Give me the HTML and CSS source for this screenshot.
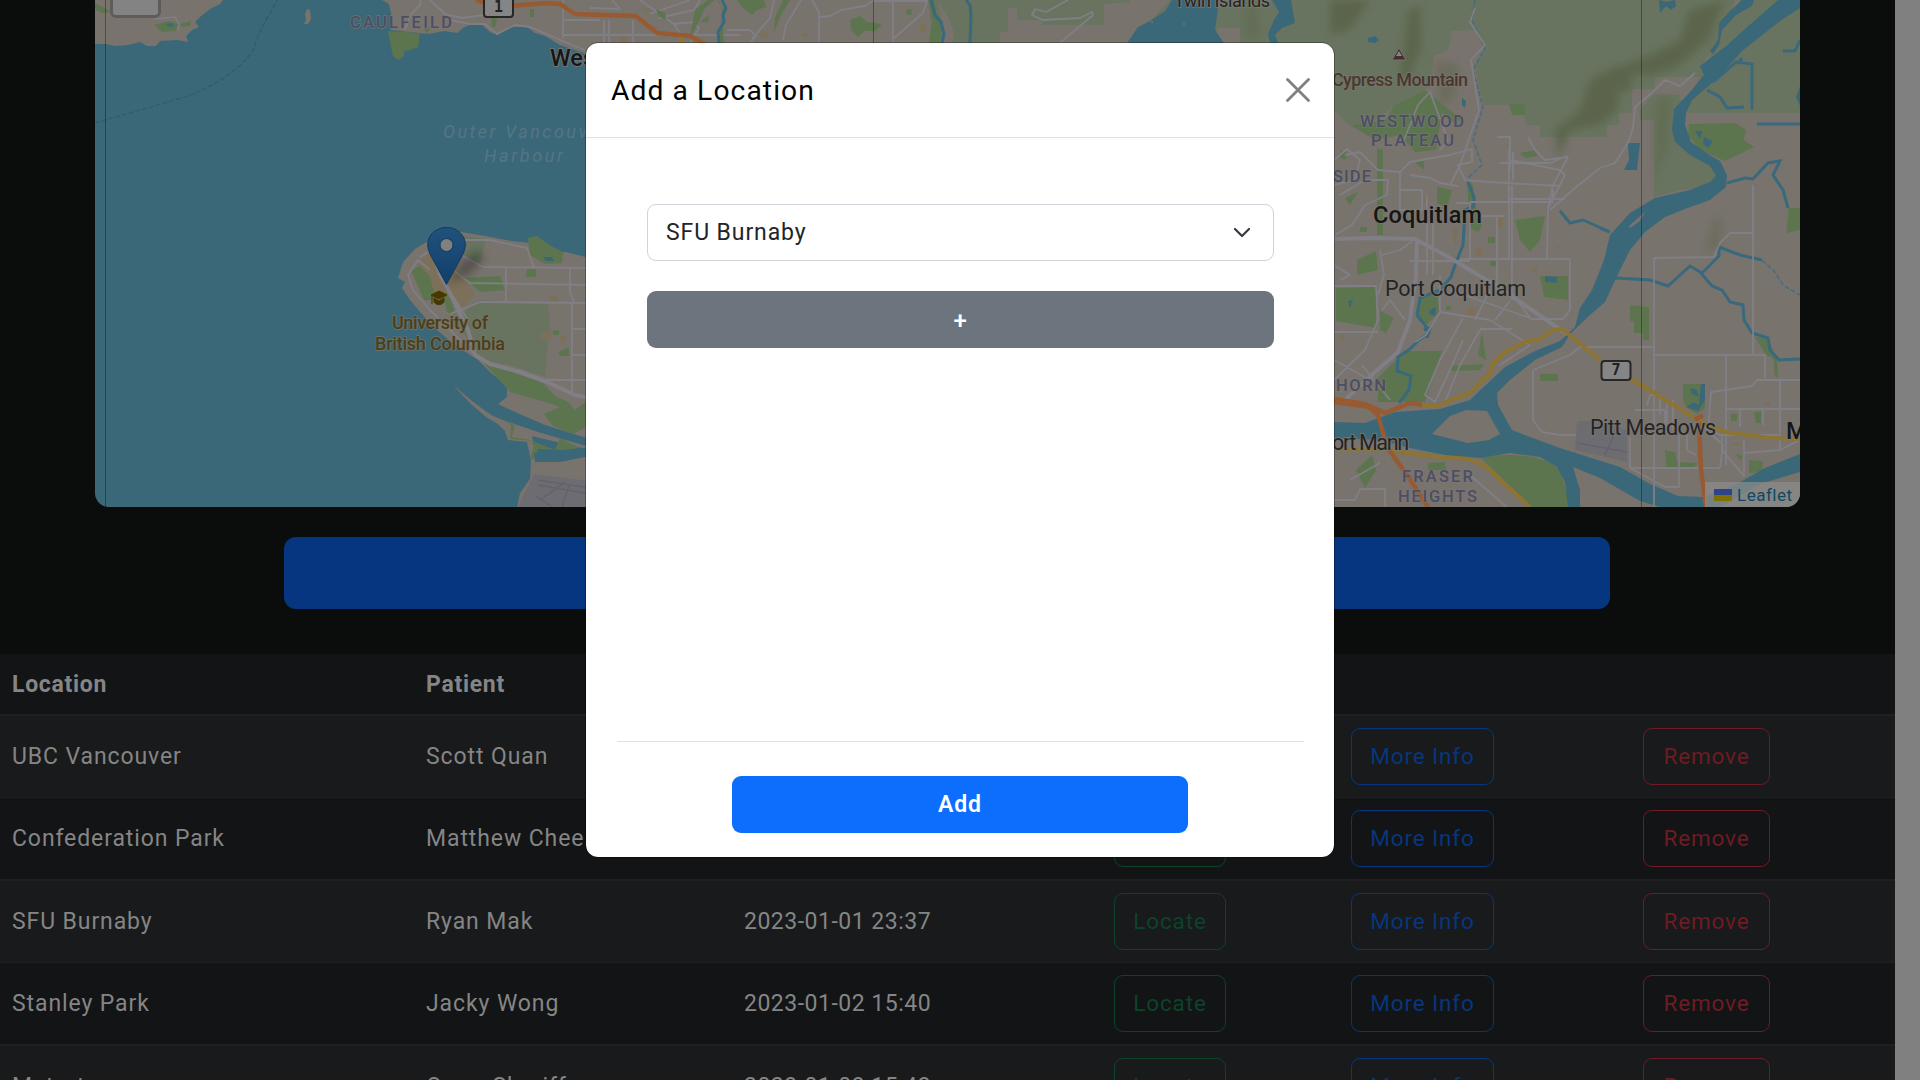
FILE: index.html
```html
<!DOCTYPE html>
<html lang="en">
<head>
<meta charset="utf-8">
<title>Locations</title>
<link rel="stylesheet" href="styles.css">
</head>
<body>
<div class="page">
<main class="content">
<section class="map">
<svg class="map-canvas" viewBox="95 0 1705 507" width="1705" height="507">
<defs>
<linearGradient id="pin" x1="0" y1="0" x2="0" y2="1"><stop offset="0" stop-color="#1f527c"/><stop offset="1" stop-color="#123f6b"/></linearGradient>
<filter id="soft" x="-30%" y="-30%" width="160%" height="160%"><feGaussianBlur stdDeviation="5"/></filter>
<filter id="relief" x="-10%" y="-10%" width="120%" height="120%"><feGaussianBlur stdDeviation="4"/></filter>
</defs>
<rect class="water" x="95" y="0" width="1705" height="507"/>
<!-- west islands and north shore -->
<path class="land" d="M95 0H223L220 4 210 9 200 17 195 22 199 27 192 30 186 36 188 42 178 40 160 41 156 46 147 46 140 42 128 45 115 46 106 44 95 44Z"/>
<path class="park" d="M95 3L112 12 102 13 95 9ZM154 25L170 21 178 24 176 31 162 32ZM180 24L191 21 190 26 182 27Z"/>
<path class="stream" d="M167 25H173"/>
<path class="road thin" d="M155 19L175 17 179 24 178 30"/>
<path class="land" d="M307 9L310 10 311 19 308 24 304 24 306 20 305 14Z"/>
<path class="land" d="M382 0L389 4 392 18 391 30 428 34 445 31 457 33 463 28 471 24 480 23 490 32 498 35 510 27 527 27 535 33 545 36 560 45 590 55H1340V0Z"/>
<path class="park" d="M388 31L420 33 418 47 410 50 404 51 404 56 398 60 393 56 391 47ZM424 29L430 28 427 35ZM491 18L497 18 495 27 492 27ZM530 9h4v8h-4Z"/>
<path class="road" d="M405 30L411 14 420 5 421 0M440 8L450 20 470 24 485 24 497 34 515 25 530 27 565 42 585 50M430 0L445 14 462 18 484 15M563 0V38M563 20H600M563 35H740M604 20V43M609 20V43M633 20V43M590 8L620 9 612 0M640 0L660 14 674 24 694 22 699 28 690 43M674 24L681 35 681 43M650 14L690 0M658 18L694 10 700 0M727 30H750L756 36 750 43M752 39L770 18 774 0M783 40L786 25 801 0M812 0L819 12V43M819 17L830 16 841 10 865 6 873 1H930M893 2V43M893 39L923 13 927 1"/>
<path class="park" d="M690 38L697 25 705 8 715 0H708L695 10ZM700 22L709 15 708 22ZM737 0L743 8 752 15 757 10 766 7 764 0ZM774 32L781 15 790 0 783 0 775 17ZM850 20L860 16 867 22 877 23 882 25 875 31 864 31 858 37 851 30ZM906 10L912 9 911 15 906 14ZM717 0L722 8 721 28 718 43 724 43 722 20 725 12 718 0ZM656 9L665 13 666 20 658 16Z"/>
<path class="field" d="M760 33L768 32 766 37 760 37ZM802 33H808V37H802ZM920 24H926V32H920ZM641 9L650 8 646 14ZM620 37H627V43H620Z"/>
<path class="stream" d="M722 0L726 8 723 15 724 22 718 32 719 43"/>
<path class="forest" d="M932 0L930 18 940 30 937 43H1340V0Z"/>
<path class="park" d="M928 0H934L937 17 942 28 939 43H929L932 20Z"/>
<path class="land" d="M938 0L950 20 954 34 952 43H944ZM1000 43V32H1008V8H1017V20H1042V25H1104V4L1130 2V0H1170L1130 43ZM1217 43V28H1240V43Z"/>
<path class="stream" d="M931 0L935 15 941 22 944 34 942 43M966 0L970 5 971 15 970 43"/>
<path class="road" d="M1068 0L1046 12 1035 9 1032 15 1043 20 1080 18 1092 12 1093 15 1060 43"/>
<path class="water" d="M1127 43L1138 27 1150 21 1165 11 1172 0H1219L1215 30 1224 43ZM1272 0H1291L1295 23 1282 28 1275 35 1278 43H1270L1268 34 1274 20 1279 12Z"/>
<circle class="land" cx="1152" cy="22" r="1"/><circle class="land" cx="1184" cy="24" r="1"/>
<path class="coast" d="M95 123L140 110 185 97C215 87 250 63 255 45S270 15 277 0"/>
<path class="highway" d="M476 0L495 7 548 3 560 4 575 14 636 16 657 33 690 36 708 46"/>
<path class="arterial" d="M681 37V43"/>

<!-- Point Grey -->
<path class="land" d="M430 240L445 232 461 232 485 236 512 241 530 243 535 252 550 257 565 252 590 258V439L545 425 515 412 498 404 507 397V386L490 372 478 360 455 345 438 331 420 312 410 300 402 288 405 282 398 278 403 262 415 249Z"/>
<path class="forest" d="M461 236L486 239 480 263 460 255ZM455 319L480 300 548 304 550 320 545 377 510 365 480 360Z"/>
<path class="field" d="M428 252L445 247 475 295 460 310 430 290 418 265Z"/>
<path class="park" d="M528 238L537 236 551 246 563 252 562 263 545 264 530 255ZM464 278L500 276 505 290 480 292ZM483 362L500 368 543 383 555 396 568 402 575 410 590 399V425L573 434 553 426 544 414 560 407 545 402 510 392ZM411 270L420 266 430 277 436 300 424 300ZM442 290L452 300 455 315 447 312ZM527 269H536V277H526ZM558 352L569 347V356H560ZM552 331L559 330V335H554Z"/>
<path class="field" d="M560 336H566V343H560ZM538 335L552 330 551 340 542 339ZM550 296H558V301H550Z"/>
<path class="water" d="M543 257L552 257 554 261 546 261Z"/>
<path class="road wide" d="M434 255L440 275 447 287 468 330 475 355 490 364 520 372 547 382 575 395 590 398"/>
<path class="road" d="M430 270L418 260 408 275 413 290 430 310 455 335 475 355M420 257L450 240 490 240 527 248 534 268M460 254L483 267 590 268M440 260L470 283 590 285M450 314L480 302 590 303M506 267V302M570 268V292L574 303M572 304V395M572 329H590M572 355H590M545 380H590M448 288L468 320"/>
<path class="land" d="M453 385L472 401 491 415 503 420 541 433 590 447V450L532 436 535 452 550 460 590 450V507H517L520 493 530 479 531 460 527 442 508 440 505 431 498 424 486 417 470 403Z"/>
<path class="park" d="M503 420L511 425 510 439 535 441 530 460 534 459 538 449 585 451 560 438 555 450 530 440 512 437 515 425Z"/>
<path class="water" d="M534 453L590 447V456L560 462 535 462Z"/>
<path class="airport" d="M534 474L590 481V507H518Z"/>
<path class="runway" d="M538 480L590 488M538 485L590 494M540 500L565 482M536 496L552 507M562 507L569 486"/>

<!-- eastern municipalities -->
<path class="land" d="M1330 0H1800V507H1330Z"/>
<path class="forest" d="M1330 0V105L1348 125 1375 120 1402 101 1430 87 1434 55 1448 50 1452 31 1475 30 1485 50 1475 65 1478 85 1484 105H1525V125H1540V137H1607V125H1619V113H1607V113H1632V89H1655V77H1700L1705 60 1725 35 1735 0Z"/>
<path class="forest" d="M1800 0H1740L1705 65 1685 113H1800ZM1654 94L1680 95 1690 150 1725 170 1710 186 1680 190 1654 197V120H1640V110Z"/>
<g filter="url(#relief)" class="relief">
<path d="M1408 10L1420 5 1422 45 1410 75 1400 80 1405 40ZM1690 10L1725 0 1708 40 1680 65 1655 75 1632 75 1632 89 1600 100 1600 75 1650 55 1680 40ZM1590 80L1618 65 1618 110 1600 125 1570 130 1558 160 1555 130 1580 110ZM1330 0L1370 0 1350 30 1330 35Z"/>
<path d="M1655 100L1672 95 1668 150 1655 180ZM1715 215L1722 220 1720 245 1704 255ZM1435 60L1460 65 1455 95 1440 110ZM1245 0H1255L1260 35 1245 40Z" opacity=".5"/>
</g>
<path class="park" d="M1395 105L1425 90 1462 120 1450 122 1442 112 1436 150 1415 152 1400 135 1375 140 1350 125 1385 120ZM1509 104H1525V115H1512ZM1377 148L1383 150V235H1377ZM1437 187L1452 190 1447 208 1437 203ZM1520 153L1534 150 1538 156 1525 158ZM1357 260L1376 251 1378 270 1357 275ZM1336 288L1376 287V328L1336 321ZM1380 311L1394 318 1386 333 1380 330ZM1419 298L1437 294 1439 312 1426 325 1418 320ZM1405 351L1442 351 1425 402 1378 402V378ZM1540 276L1568 276V300L1544 297ZM1540 374H1558V381H1540ZM1515 220L1545 216 1540 240 1530 252 1520 240ZM1450 366L1484 364 1480 370 1452 371ZM1482 332L1486 360 1478 355ZM1356 470L1372 455 1376 470 1365 488ZM1428 463L1445 462 1446 470 1428 470ZM1480 457C1520 451 1555 458 1562 475L1570 507H1532ZM1689 124L1735 123 1746 130 1744 140 1754 147 1725 161 1700 150 1688 135ZM1789 208H1800V230L1786 233ZM1630 305L1649 307V340H1643V333H1634V321H1630ZM1683 384H1705V408L1697 414 1687 408 1683 400ZM1665 450L1675 452 1677 462 1698 463 1694 467 1666 467ZM1749 460L1763 461 1762 472 1749 473ZM1731 414H1737V421H1731ZM1754 412H1761V423H1756ZM1736 454L1743 456 1740 461ZM1755 337L1768 338 1777 360 1778 377 1775 377 1773 358 1766 355ZM1467 180L1473 185 1475 205 1482 225 1478 232 1470 228ZM1341 150L1347 153 1346 160 1340 158ZM1358 192L1350 205 1345 198ZM1415 162L1424 161V170ZM1360 227H1367V232H1360ZM1488 237H1495V243H1488ZM1490 261H1496V266H1490ZM1446 306H1451V310H1446Z"/>
<path class="field" d="M1476 248H1482V256H1476ZM1497 216H1503V227H1497ZM1466 309L1475 308V315H1466ZM1452 230L1459 228 1455 245ZM1530 268L1538 267 1536 273ZM1560 245L1563 250 1556 248ZM1430 195L1425 203 1421 200ZM1340 335L1344 334V340H1340ZM1765 403L1770 402V406H1765ZM1732 443H1740V445H1732Z"/>
<g class="river">
<path d="M1778 0L1800 0V8L1780 21 1742 51 1718 78 1692 100 1686 113 1685 125 1691 142 1708 154 1720 161 1727 175 1726 187 1710 200 1685 209 1665 217 1645 232 1630 250 1619 272 1605 302 1590 315 1571 333 1562 347 1535 360 1510 380 1497 393 1498 405 1512 430 1530 437 1560 448 1585 456 1620 467 1650 484 1678 496 1705 497 1735 485 1765 468 1800 454V472L1760 484 1720 507H1660L1640 501 1600 478 1573 467 1580 490 1580 507H1568L1565 482 1557 467 1540 457 1510 453 1480 458 1450 456 1410 448 1380 440 1334 438V422L1365 423 1395 412 1440 409 1470 400 1488 383 1505 367 1535 351 1560 341 1575 327 1580 308 1592 290 1604 260 1610 235 1630 213 1655 198 1690 190 1710 182 1716 176 1710 166 1690 155 1675 142 1672 130 1674 109 1690 92 1704 75 1700 66 1725 47 1745 29Z"/>
<path d="M1742 0L1754 0 1752 6 1736 15 1722 30 1719 45 1713 54 1710 51 1718 40 1719 23 1728 13ZM1659 0L1667 2 1675 0 1676 6 1671 10 1666 6 1660 13ZM1628 143H1640L1637 170 1624 170 1629 160ZM1368 38L1375 36 1379 40 1375 43 1368 42ZM1462 98L1466 101 1465 108 1462 105ZM1545 276L1557 277V283L1545 282ZM1430 310L1436 307 1435 316 1429 314ZM1348 301L1353 300 1350 308ZM1800 86L1796 97 1800 106ZM1690 388L1697 390 1699 397 1692 394ZM1701 384H1705V400L1698 411 1686 407 1694 402 1699 405ZM1704 137L1713 141 1708 148 1703 144ZM1695 131L1702 131 1700 139ZM1707 130L1715 134Z"/>
</g>
<path class="land" d="M1432 434L1450 416 1466 410 1487 411 1500 434 1489 440 1468 443ZM1629 226L1645 212 1640 221 1630 228Z"/>
<path class="stream" d="M1468 182L1474 197 1474 206 1465 210 1463 245 1455 265 1451 277 1440 290 1420 298 1417 315 1425 325 1429 333 1419 340 1410 349 1398 357 1397 371 1411 376 1409 390 1399 403M1424 330L1430 328 1427 338M1560 211L1570 223 1583 220 1608 231M1615 278L1650 280 1668 286 1690 266 1700 272 1712 286 1722 290 1730 302 1743 305 1744 320 1752 333 1768 338 1770 350 1779 360 1800 359M1702 273L1719 256V247L1740 255 1762 260M1600 228L1610 232M1727 183L1745 178 1753 179 1768 163 1780 161 1773 175 1783 190 1788 208M1713 82L1736 62 1752 64V110M1738 64L1742 58M1707 90L1720 97 1727 108 1744 107M1757 124H1800M1783 51L1795 51 1800 40"/>
<path class="creek" d="M1475 0L1472 20 1485 48 1473 70 1483 107 1473 140 1482 165 1468 178M1762 260L1775 272 1783 285 1800 295"/>
<path class="road wide" d="M1334 239L1375 238 1415 239 1445 255 1500 288 1555 326 1567 334M1417 240L1416 275 1410 320 1398 352 1375 372 1345 400"/>
<path class="road" d="M1475 8L1470 22 1485 45 1471 60 1479 110 1460 165 1450 185M1402 145L1418 105 1430 92 1448 140 1440 150M1334 160L1347 149 1360 160 1355 180 1334 185M1345 155L1360 152 1378 170 1400 172 1410 162 1450 155 1472 149 1472 162 1458 165 1465 180 1490 182 1560 186M1400 172V210H1422V190H1400M1340 195L1365 180 1388 180 1387 195 1365 205 1352 225 1335 235M1410 175L1430 178 1440 183 1458 186M1427 196V275M1433 205V275M1497 215V290M1509 150V258M1513 152V180M1470 202H1553M1482 216H1505M1553 190V200M1512 186V300M1510 199H1565M1500 163H1550L1567 156M1497 137H1510V170M1528 137L1535 150 1545 160 1568 157 1553 185 1548 208M1510 160L1560 170 1565 175 1548 208M1550 210L1575 188 1600 168 1615 163 1628 143 1633 128 1635 107 1655 90 1665 80 1680 86 1695 73M1548 208L1547 258M1460 259H1570V310L1563 319H1530M1456 203H1470V258M1410 261H1470M1334 286H1376L1378 320 1365 350 1334 380M1380 250L1384 275 1378 295M1334 332H1378M1382 255L1400 250 1415 239M1334 265L1350 275 1340 280M1440 275L1440 312 1426 335 1415 342M1440 312L1490 320 1530 345M1450 290L1530 318 1510 290M1495 320L1510 301M1463 318L1440 360 1425 395 1435 402 1450 370 1463 340M1480 330L1460 365 1445 402M1480 329H1512M1490 290L1475 320M1530 345L1500 365M1533 370V420L1542 432 1560 435H1580V422L1600 422M1533 370L1570 355 1580 347H1654M1654 510V258L1714 257 1720 243 1730 233H1753M1753 185V355M1655 355H1765V378M1726 355V395L1726 465M1708 435L1711 392 1752 386 1757 380H1800M1780 380V450M1726 409H1800M1740 409V427M1763 409V425M1635 410H1665V425M1647 405L1650 395H1660V415M1630 437V468H1720M1630 468L1665 487 1679 487V435M1700 425L1720 435 1780 435M1722 436V450L1744 476 1744 440M1720 468L1723 445 1707 430M1744 453L1780 450 1800 440M1330 500H1355L1360 489 1385 489V507M1350 480L1380 463M1470 475L1510 510M1405 320L1390 300 1382 310M1370 380L1334 360M1362 365L1390 400M1667 400V430M1687 430V450L1696 455M1673 400V430"/>
<path class="arterial" d="M1422 406H1438L1455 398 1468 394 1490 374 1492 365 1505 352 1525 342 1540 339 1552 330 1562 329 1600 360M1631 379L1700 421 1725 432 1770 438 1800 439M1340 449L1385 449 1405 453 1430 456 1470 459 1485 466 1530 507"/>
<path class="highway" d="M1334 399L1365 404 1385 413 1410 403 1422 405M1365 404L1378 415 1387 447 1407 475 1428 507M1334 402L1370 407M1699 422L1701 470 1706 507"/>
<path class="highway" d="M1695 420L1703 415"/>
<path class="airport" d="M1577 421H1600L1627 430V462L1575 450Z"/>
<path class="runway" d="M1577 443L1627 452M1605 455L1615 432"/>
<path class="tile" d="M105.500 0V507M873.500 0V507M1641.500 0V507"/>

<!-- labels -->
<g class="lbl area">
<text x="350" y="28" textLength="102">CAULFEILD</text>
<text x="1360" y="127" textLength="104">WESTWOOD</text>
<text x="1371" y="146" textLength="83">PLATEAU</text>
<text x="1333" y="182" textLength="38">SIDE</text>
<text x="1336" y="391" textLength="50">HORN</text>
<text x="1402" y="482" textLength="71">FRASER</text>
<text x="1398" y="502" textLength="79">HEIGHTS</text>
</g>
<g class="lbl sea">
<text x="443" y="138" textLength="164">Outer Vancouver</text>
<text x="484" y="162" textLength="79">Harbour</text>
</g>
<g class="lbl campus">
<text x="392" y="329" textLength="96">University of</text>
<text x="375" y="350" textLength="130">British Columbia</text>
</g>
<text class="lbl peak" x="1332" y="86" textLength="136">Cypress Mountain</text>
<g class="lbl town">
<text x="1385" y="296" textLength="141">Port Coquitlam</text>
<text x="1320" y="450" textLength="89">Port Mann</text>
<text x="1590" y="435" textLength="126">Pitt Meadows</text>
<text class="small" x="1174" y="7" textLength="96">Twin Islands</text>
</g>
<g class="lbl city">
<text x="550" y="66">West</text>
<text x="1373" y="223" textLength="109">Coquitlam</text>
<text x="1786" y="439">M</text>
</g>
<path class="peak-icon" d="M1392 60L1399 48 1406 60Z"/><path class="peak-cap" d="M1396 56L1399 51 1402 56Z"/>
<path class="cap-icon" d="M431 295L439 291 447 295 439 299ZM434 298L439 301 444 298V302C441 306 436 305 434 302ZM432 296V304"/>
<g class="shield">
<rect x="484" y="-8" width="29" height="25" rx="3"/><text x="498.500" y="12">1</text>
<rect x="1601.500" y="361" width="29" height="19" rx="3"/><text x="1616" y="375">7</text>
</g>
<path d="M447 284L462 262 478 250 484 258 470 274Z" filter="url(#soft)" opacity=".3"/>
<path d="M446.500 284.500L431 256C422 240 433 227.500 446.500 227.500S471 240 462 256Z" fill="url(#pin)" stroke="#133a5c"/>
<circle cx="446.500" cy="245" r="6.500" fill="#808080" stroke="#133a5c"/>
</svg>
<div class="zoom-control"></div>
<div class="attribution"><span class="flag"></span>Leaflet</div>
</section>
<div class="add-bar"></div>
<div class="table">
<div class="row head"><b>Location</b><b>Patient</b></div>
<div class="row"><span>UBC Vancouver</span><span>Scott Quan</span><span></span><a class="btn green">Locate</a><a class="btn blue">More Info</a><a class="btn red">Remove</a></div>
<div class="row"><span>Confederation Park</span><span>Matthew Chee</span><span></span><a class="btn green"></a><a class="btn blue">More Info</a><a class="btn red">Remove</a></div>
<div class="row"><span>SFU Burnaby</span><span>Ryan Mak</span><span class="date">2023-01-01 23:37</span><a class="btn green">Locate</a><a class="btn blue">More Info</a><a class="btn red">Remove</a></div>
<div class="row"><span>Stanley Park</span><span>Jacky Wong</span><span class="date">2023-01-02 15:40</span><a class="btn green">Locate</a><a class="btn blue">More Info</a><a class="btn red">Remove</a></div>
<div class="row"><span>Metrotown</span><span>Omar Sheriff</span><span class="date">2023-01-03 15:43</span><a class="btn green">Locate</a><a class="btn blue">More Info</a><a class="btn red">Remove</a></div>
</div>
</main>
<div class="scrollbar"></div>
</div>
<div class="modal-layer">
<div class="modal">
<header class="modal-head"><h5>Add a Location</h5>
<svg width="24" height="24" viewBox="0 0 24 24"><path d="M1.500 1.500L22.500 22.500M22.500 1.500L1.500 22.500" stroke="#808080" stroke-width="2.800" stroke-linecap="round"/></svg></header>
<div class="modal-body">
<div class="select"><span>SFU Burnaby</span><svg width="18" height="12" viewBox="0 0 18 12"><path d="M2 2L9 9 16 2" fill="none" stroke="#343a40" stroke-width="2.200" stroke-linecap="round" stroke-linejoin="round"/></svg></div>
<div class="plus">+</div>
</div>
<footer class="modal-foot"><div class="submit">Add</div></footer>
</div>
</div>
</body>
</html>
```
FILE: styles.css
```css
* { box-sizing: border-box; }
body { margin: 0; height: 1080px; overflow: hidden; background: #0b0d0c; font: 450 23px/36px Roboto, sans-serif; letter-spacing: 0.9px; color: #858585; }
.page { display: flex; height: 1080px; overflow: hidden; }
.content { flex: 1; min-width: 0; }
.scrollbar { width: 25px; background: #808080; }
.map { position: relative; margin: 0 95px; height: 507px; border-radius: 0 0 14px 14px; overflow: hidden; }
.map-canvas { display: block; }
.zoom-control { position: absolute; left: 15px; top: -30px; width: 51px; height: 48px; border: 3px solid #5f5b58; border-radius: 6px; background: #838383; }
.attribution { position: absolute; right: 0; bottom: 0; width: 95px; height: 25px; padding-left: 9px; display: flex; align-items: center; gap: 5px; background: rgba(140, 140, 140, 0.72); color: #0b4a63; font-size: 17px; letter-spacing: 0.5px; }
.flag { width: 18px; height: 12px; background: linear-gradient(#2d4488 50%, #807000 50%); }
.add-bar { margin: 30px 285px 0 284px; height: 72px; border-radius: 12px; background: #063680; }

.table { margin-top: 45px; }
.row { display: grid; grid-template-columns: 414px 318px 370px 237px 292px 264px; align-items: center; height: 82px; border-bottom: 1px solid #1e2022; background: #181a1b; }
.row > * { margin-left: 12px; justify-self: start; white-space: nowrap; }
.row:nth-child(odd) { height: 83px; border-bottom-width: 2px; background: #121416; }
.row.head { height: 62px; }
.row b { padding-top: 1px; font-weight: 700; letter-spacing: 0.7px; }
.row .date { letter-spacing: 0.5px; }
.row .btn { height: 57px; border: 1px solid; border-radius: 9px; font-size: 22.500px; letter-spacing: 0.85px; line-height: 55px; text-align: center; }
.green { width: 112px; color: #0d432b; }
.blue { width: 143px; color: #07367e; }
.red { width: 127px; color: #6e1b23; }

.modal-layer { position: absolute; inset: 0 0 auto; display: flex; justify-content: center; padding-top: 43px; }
.modal { width: 748px; height: 814px; display: flex; flex-direction: column; background: #fff; border-radius: 12px; outline: 1px solid rgba(0, 0, 0, 0.3); color: #212529; }
.modal-head { height: 95px; padding: 0 24px 0 25px; display: flex; align-items: center; justify-content: space-between; border-bottom: 1px solid #dee2e6; }
.modal-head h5 { margin: 0; padding-top: 2px; font-size: 28.200px; font-weight: 400; color: #000; letter-spacing: 1.1px; }
.modal-body { flex: 1; padding: 66px 60px 0 61px; display: flex; flex-direction: column; gap: 30px; }
.select { height: 57px; padding: 1px 22px 0 18px; display: flex; align-items: center; justify-content: space-between; border: 1px solid #ced4da; border-radius: 9px; }
.plus { height: 57px; border-radius: 9px; background: #6c757d; color: #fff; line-height: 61px; text-align: center; font-size: 24px; font-weight: 500; }
.modal-foot { height: 116px; margin: 0 30px 0 31px; padding-top: 34px; border-top: 1px solid #dee0e2; }
.submit { height: 57px; margin: 0 116px 0 115px; border-radius: 9px; background: #0d6efd; color: #fff; font-weight: 600; line-height: 57px; text-align: center; }

.water, .river { fill: #3b6878; }
.land { fill: #79736e; }
.forest { fill: #68745f; }
.park { fill: #5c754f; }
.field { fill: #7c7059; }
.relief { fill: #5c654b; }
.airport { fill: #6d6c71; }
.runway { fill: none; stroke: #63626e; stroke-width: 1.500; }
.road { fill: none; stroke: #807f86; stroke-width: 1.800; stroke-linejoin: round; }
.road.wide { stroke-width: 4; }
.road.thin { stroke-width: 1.500; }
.arterial { fill: none; stroke: #8d7431; stroke-width: 4; stroke-linejoin: round; }
.highway { fill: none; stroke: #985a30; stroke-width: 4.500; stroke-linejoin: round; }
.stream { fill: none; stroke: #38697d; stroke-width: 3; }
.creek { fill: none; stroke: #456d80; stroke-width: 1.500; stroke-dasharray: 5 2; }
.coast { fill: none; stroke: #34596c; stroke-width: 1.200; stroke-dasharray: 5 2; }
.tile { fill: none; stroke: #000; stroke-opacity: 0.35; }

.lbl { font-family: Roboto, sans-serif; letter-spacing: 0; paint-order: stroke; stroke-width: 2px; stroke-linejoin: round; font-weight: 500; }
.area { font-size: 16.500px; fill: #4c4e63; stroke: rgba(125, 120, 118, 0.6); }
.sea { font-size: 18px; font-style: italic; font-weight: 400; fill: #557584; stroke: none; }
.campus { font-size: 18px; fill: #493f1c; stroke: rgba(125, 115, 95, 0.7); }
.peak { font-size: 18px; fill: #493732; stroke: rgba(125, 120, 110, 0.6); }
.town { font-size: 21.500px; font-weight: 450; fill: #242424; stroke: rgba(125, 120, 115, 0.8); }
.town .small { font-size: 18px; }
.city { font-size: 23.500px; fill: #161616; stroke: rgba(125, 120, 115, 0.8); }
.peak-icon { fill: #42302d; stroke: #79736e; }
.peak-cap { fill: #8a8580; }
.cap-icon { fill: #453900; stroke: #453900; }
.shield rect { fill: #858585; stroke: #262626; stroke-width: 2; }
.shield text { font: 700 15px "DejaVu Sans Mono", monospace; fill: #222; text-anchor: middle; letter-spacing: 0; }
```
